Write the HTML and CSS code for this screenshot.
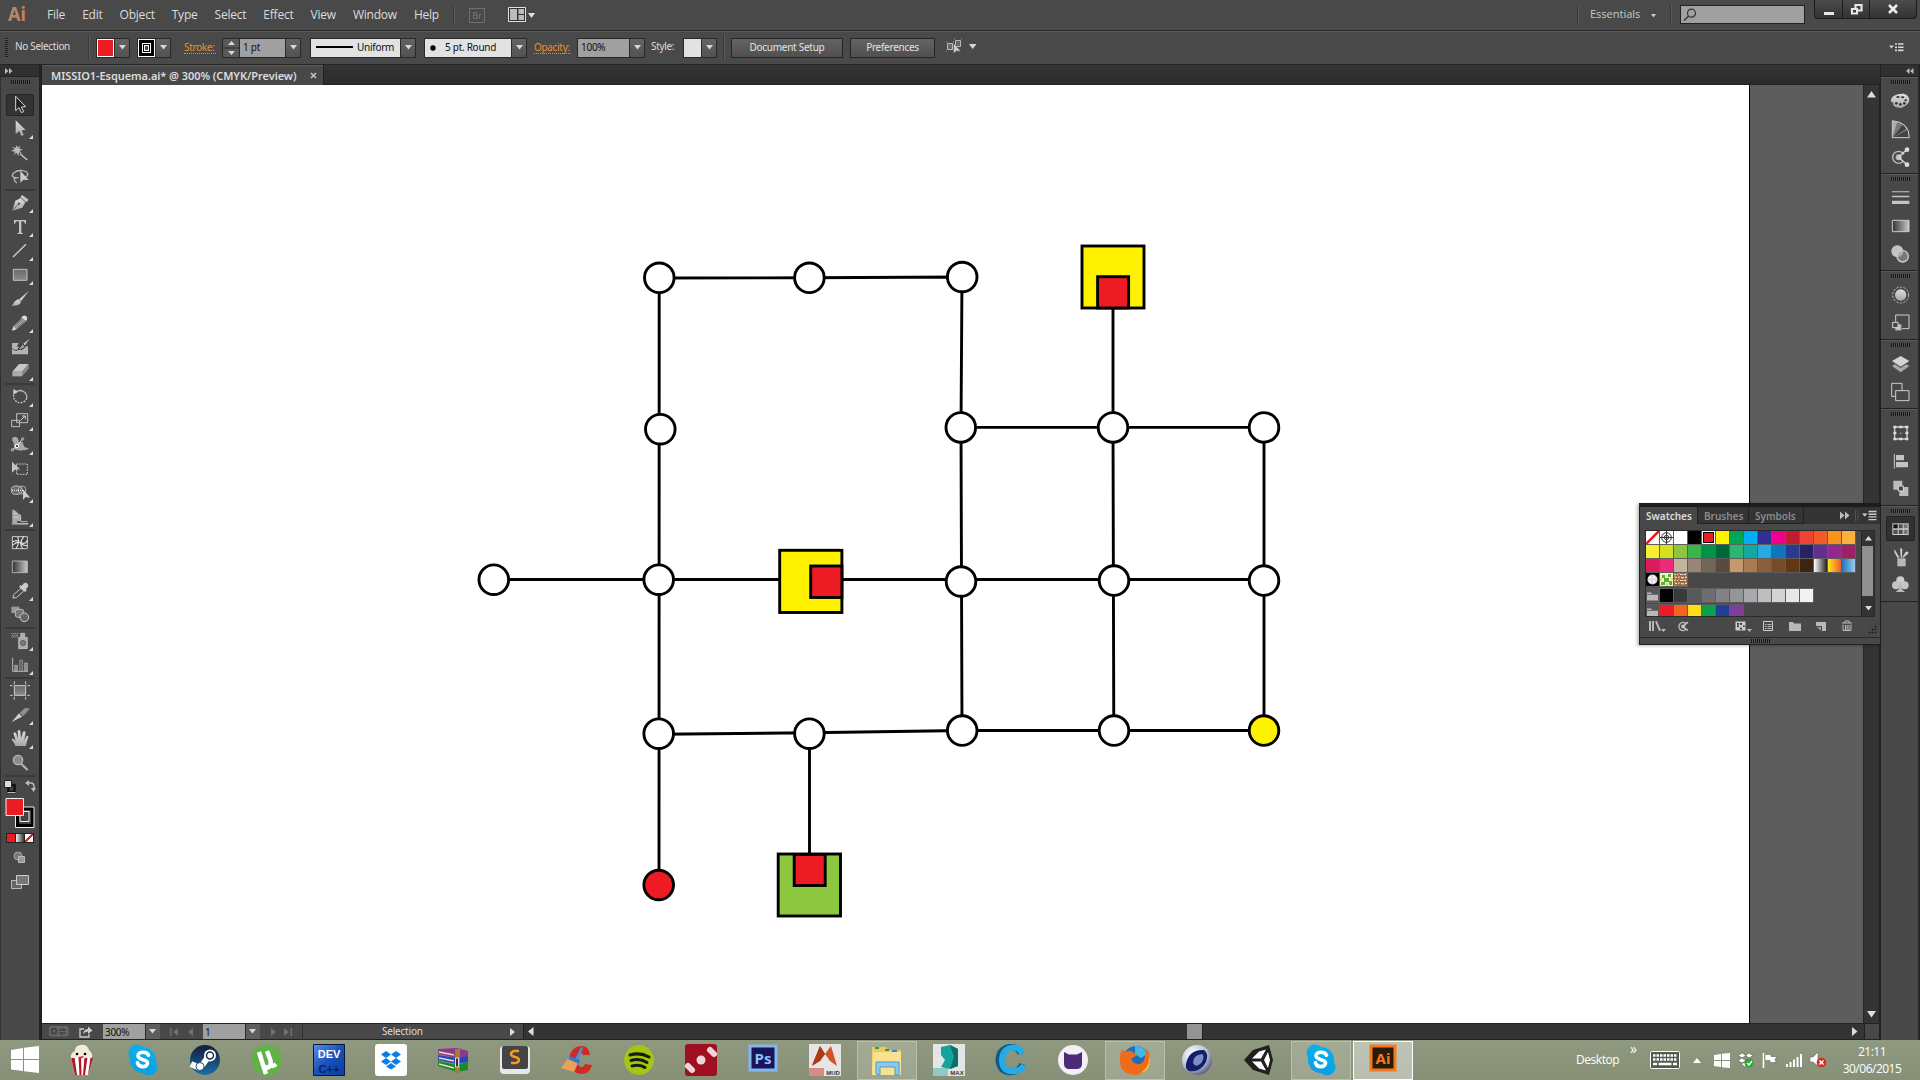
FILE: index.html
```html
<!DOCTYPE html>
<html lang="en">
<head>
<meta charset="utf-8">
<title>MISSIO1-Esquema.ai</title>
<link rel="stylesheet" href="styles.css">
</head>
<body>
<svg class="defs" width="0" height="0">
  <defs>
    <linearGradient id="gMetal" x1="0" y1="0" x2="0" y2="1"><stop offset="0" stop-color="#dedede"/><stop offset="1" stop-color="#a8a8a8"/></linearGradient>
    <linearGradient id="gDim" x1="0" y1="0" x2="0" y2="1"><stop offset="0" stop-color="#6a6a6a"/><stop offset="1" stop-color="#8a8a8a"/></linearGradient>
    <linearGradient id="gFade"><stop offset="0" stop-color="#333"/><stop offset="1" stop-color="#c8c8c8"/></linearGradient>
    <linearGradient id="gSkype" x1="0" y1="0" x2="0" y2="1"><stop offset="0" stop-color="#0ab0f0"/><stop offset="1" stop-color="#0a9fe0"/></linearGradient>
    <linearGradient id="gSteam" x1="0" y1="0" x2="0" y2="1"><stop offset="0" stop-color="#141a38"/><stop offset="1" stop-color="#1a6fa5"/></linearGradient>
    <linearGradient id="gDev" x1="0" y1="0" x2="1" y2="1"><stop offset="0" stop-color="#5c8fe8"/><stop offset=".5" stop-color="#1a50b8"/><stop offset="1" stop-color="#0a3fa0"/></linearGradient>
    <radialGradient id="gC4d" cx=".35" cy=".3" r=".8"><stop offset="0" stop-color="#fff"/><stop offset=".6" stop-color="#b8c0d8"/><stop offset="1" stop-color="#404868"/></radialGradient>
    <symbol id="skype" viewBox="0 0 32 32"><circle cx="10" cy="9" r="8.500" fill="url(#gSkype)"/><circle cx="22" cy="23" r="8.500" fill="url(#gSkype)"/><circle cx="16" cy="16" r="13" fill="url(#gSkype)"/><path d="M21.500 11.200C20.500 8.800 18.500 8.200 16 8.200c-3 0-5 1.500-5 3.600 0 5 9.600 2.700 9.600 7.300 0 2.300-2.300 3.500-4.700 3.500-2.800 0-4.600-1.200-5.500-4" fill="none" stroke="#fff" stroke-width="3.600" stroke-linecap="round"/></symbol>
    <symbol id="folder" viewBox="0 0 13 13"><path d="M1 3.500h4l1 1.500h6v6.500H1z" fill="#b8b8b8"/><path d="M1 5.500h11" stroke="#555" stroke-width=".8"/></symbol>
    <symbol id="down" viewBox="0 0 7 5"><path d="M0 0h7L3.500 4.600z" fill="#d8d8d8"/></symbol>
  </defs>
</svg>

<header class="menubar">
  <span class="brand">Ai</span>
  <nav class="menu"><span>File</span><span>Edit</span><span>Object</span><span>Type</span><span>Select</span><span>Effect</span><span>View</span><span>Window</span><span>Help</span></nav>
  <i class="vsep"></i>
  <span class="bridge">Br</span>
  <svg class="arrange" width="28" height="16" viewBox="0 0 28 16"><path d="M.5.500h17v14H.5z" fill="#333" stroke="#e2e2e2"/><path d="M2 2h7v11H2zM10.500 2H16v5h-5.500zM10.500 8H16v5h-5.500z" fill="#bbb"/><path d="M20 6h7l-3.500 5z" fill="#e2e2e2"/></svg>
  <div class="menubar-right">
    <i class="vsep"></i>
    <span class="workspace-name">Essentials</span>
    <svg class="ws-arrow" width="5" height="4"><path d="M0 0h5L2.500 3.500z" fill="#ccc"/></svg>
    <i class="vsep"></i>
    <div class="search"><svg width="14" height="14"><circle cx="8.500" cy="5.200" r="4" fill="none" stroke="#333" stroke-width="1.200"/><path d="M5.500 8.300L1 12.500" stroke="#333" stroke-width="1.500"/></svg></div>
    <div class="winbtns">
      <span class="wb wb-min"><svg width="12" height="14"><path d="M1 10h10v3H1z" fill="#e8e8e8"/></svg></span>
      <span class="wb wb-max"><svg width="13" height="13"><path d="M5.500 2h6v5.500h-6z" fill="none" stroke="#e8e8e8" stroke-width="2.200"/><path d="M2 6h5v4.500H2z" fill="#333" stroke="#e8e8e8" stroke-width="2.200"/></svg></span>
      <span class="wb wb-close"><svg width="12" height="10"><path d="M2 1l8 8M10 1L2 9" stroke="#eee" stroke-width="2.500"/></svg></span>
    </div>
  </div>
</header>

<section class="control">
  <i class="vgrip"></i>
  <span class="lbl nosel">No Selection</span>
  <i class="vsep tall"></i>
  <div class="field fill"><b class="chip red"></b><u><svg width="7" height="5"><use href="#down"/></svg></u></div>
  <div class="field strk"><b class="chip ring"></b><u><svg width="7" height="5"><use href="#down"/></svg></u></div>
  <span class="lbl link l-stroke">Stroke:</span>
  <div class="field weight"><s><svg width="7" height="16"><path d="M0 5h7L3.500 1zM0 11h7l-3.500 4z" fill="#d8d8d8"/><path d="M-5 8h18" stroke="#2b2b2b"/></svg></s><em>1 pt</em><u><svg width="7" height="5"><use href="#down"/></svg></u></div>
  <div class="field profile"><em class="light"><svg width="37" height="3"><path d="M0 0h37v2H0z"/></svg>Uniform</em><u><svg width="7" height="5"><use href="#down"/></svg></u></div>
  <div class="field brush"><em class="light"><svg width="6" height="6"><circle cx="3" cy="3" r="2.700"/></svg>5 pt. Round</em><u><svg width="7" height="5"><use href="#down"/></svg></u></div>
  <span class="lbl link l-opacity">Opacity:</span>
  <div class="field opac"><em>100%</em><u><svg width="7" height="5"><use href="#down"/></svg></u></div>
  <span class="lbl l-style">Style:</span>
  <div class="field sty"><b class="chip pale"></b><u><svg width="7" height="5"><use href="#down"/></svg></u></div>
  <i class="vsep tall"></i>
  <span class="btn b-doc">Document Setup</span>
  <span class="btn b-pref">Preferences</span>
  <svg class="isolate" width="32" height="16" viewBox="0 0 32 16"><path d="M1.500 4.500h5v6h-5zM9.500 1.500h5v6h-5z" fill="#666" stroke="#bbb"/><path d="M0 3h8M0 12h8M8 0h8" stroke="#999" stroke-dasharray="1 6"/><path d="M7.500 4v10.500l2.800-2.500 4.700.5z" fill="#ccc" stroke="#444" stroke-width=".5"/><path d="M23 5h7.500L26.700 10z" fill="#d8d8d8"/></svg>
  <svg class="flyout" width="15" height="9"><path d="M0 2.500h5L2.500 5.500z" fill="#ccc"/><path d="M6 1h2M9 1h5.500M6 4.200h2M9 4.200h5.500M6 7.400h2M9 7.400h5.500" stroke="#d8d8d8" stroke-width="1.600"/></svg>
</section>

<main class="work">
  <aside class="tools">
    <div class="collapse left"><svg width="8" height="6"><path d="M0 0l3.500 3L0 6zM4 0l3.500 3L4 6z" fill="#bbb"/></svg></div>
    <i class="grip"></i>
    <div class="tgroup first">
      <div class="tool active"><svg viewBox="0 0 60 60"><path d="M17 4v43l10-9 7 15 7-3-7-14 13-1z" fill="#222" stroke="#d8d8d8" stroke-width="3"/></svg></div>
      <div class="tool more"><svg viewBox="0 0 60 60"><path d="M17 4v41l11-9 6 15 7-3-6-14 12-1z" fill="url(#gMetal)"/></svg></div>
      <div class="tool"><svg viewBox="0 0 60 60"><path d="M20 5l3 9 8-6-3 10 11 1-10 5 8 8-10-4-2 12-5-11-10 7 6-10-13-2 11-5-8-8 11 4z" fill="#bcbcbc"/><path d="M30 32l22 19" stroke="#ccc" stroke-width="4"/></svg></div>
      <div class="tool"><svg viewBox="0 0 60 60"><path d="M26 32C8 36 2 25 12 17 24 7 50 9 53 20c1 6-4 10-8 11M17 30c-9 6-2 14 4 18" fill="none" stroke="#b8b8b8" stroke-width="4"/><path d="M31 11v36l9-9 16 1z" fill="#ccc"/></svg></div>
    </div>
    <div class="tgroup">
      <div class="tool more"><svg viewBox="0 0 60 60"><path d="M36 6L56 20l-7 8L31 12z" fill="#c8c8c8"/><path d="M32 15l14 13-9 16L7 53l9-30z" fill="url(#gMetal)"/><path d="M8 52l17-19" stroke="#444" stroke-width="2"/><circle cx="27" cy="32" r="3" fill="#333"/></svg></div>
      <div class="tool more"><svg viewBox="0 0 60 60"><path d="M12 9h36v11h-3q-1-7-7-7h-4v33q0 3 5 3v2H22v-2q5 0 5-3V13h-5q-6 0-7 7h-3z" fill="#c4c4c4"/></svg></div>
      <div class="tool more"><svg viewBox="0 0 60 60"><path d="M9 48L48 10" stroke="#d0d0d0" stroke-width="4"/></svg></div>
      <div class="tool more"><svg viewBox="0 0 60 60"><path d="M10 13h41v33H10z" fill="url(#gDim)" stroke="#c0c0c0" stroke-width="3"/></svg></div>
      <div class="tool"><svg viewBox="0 0 60 60"><path d="M57 5L27 31l6 6z" fill="#ccc"/><path d="M26 31l7 8c-3 10-14 12-29 11 8-4 8-16 22-19z" fill="url(#gMetal)"/></svg></div>
      <div class="tool more"><svg viewBox="0 0 60 60"><path d="M36 14l11 12-29 24-11 3 3-13z" fill="#9a9a9a"/><path d="M34 13q7-9 14-4 7 6 0 16z" fill="#ddd"/><path d="M10 40l8 9-12 4z" fill="#ddd"/><path d="M16 36l20-17M22 43l20-17" stroke="#444" stroke-width="1.500"/></svg></div>
      <div class="tool"><svg viewBox="0 0 60 60"><path d="M6 18h20l-6 12 34-2v24H6z" fill="#b4b4b4"/><path d="M8 35q9 10 20 0" fill="none" stroke="#444" stroke-width="3"/><path d="M59 5L39 21l5 5z" fill="#ccc"/><path d="M37 20l9 8q-7 13-22 8 6-4 13-16z" fill="#999" stroke="#2c2c2c" stroke-width="3"/></svg></div>
      <div class="tool more"><svg viewBox="0 0 60 60"><path d="M27 9h29L36 32H7z" fill="#c8c8c8"/><path d="M36 32L56 9v14L36 46z" fill="#8a8a8a"/><path d="M7 32h29v14H7z" fill="#aaa"/></svg></div>
    </div>
    <div class="tgroup">
      <div class="tool more"><svg viewBox="0 0 60 60"><path d="M18 15A20 20 0 0 1 50 34" fill="none" stroke="#bbb" stroke-width="4"/><path d="M50 34A20 20 0 1 1 12 20" fill="none" stroke="#ccc" stroke-width="4" stroke-dasharray="5 4"/><path d="M10 6v17l15-9z" fill="#ccc"/></svg></div>
      <div class="tool more"><svg viewBox="0 0 60 60"><path d="M20 8h33v27H20zM5 28h24v19H5z" fill="none" stroke="#c0c0c0" stroke-width="3"/><path d="M32 28l12-12M36 15h10v10" fill="none" stroke="#ddd" stroke-width="3"/></svg></div>
      <div class="tool more"><svg viewBox="0 0 60 60"><path d="M6 10q8-8 16-2 5 5 4 14l12-2q2 12 6 16 6 4 14 3-8 8-18 6-8 4-16 0-12 2-12-10 0-14-6-19 2-6-0-6z" fill="#a8a8a8"/><path d="M6 44L21 33 37 12" fill="none" stroke="#ddd" stroke-width="3"/><circle cx="21" cy="33" r="5" fill="#444" stroke="#fff" stroke-width="3"/><path d="M4 42h6v6H4zM35 9h6v6h-6z" fill="#444" stroke="#ddd" stroke-width="2"/></svg></div>
      <div class="tool"><svg viewBox="0 0 60 60"><path d="M20 15h32v31H20z" fill="none" stroke="#ccc" stroke-width="3" stroke-dasharray="5 3"/><path d="M6 8v33l9-9 15-1z" fill="#c4c4c4"/></svg></div>
      <div class="tool more"><svg viewBox="0 0 60 60"><rect x="4" y="9" width="33" height="25" rx="12" fill="#6c6c6c" stroke="#bbb" stroke-width="3"/><circle cx="36" cy="21" r="12" fill="none" stroke="#aaa" stroke-width="3"/><path d="M6 22h34" stroke="#fff" stroke-width="3" stroke-dasharray="3 3"/><path d="M39 19v32l8-9 14 2z" fill="#ccc"/></svg></div>
      <div class="tool more"><svg viewBox="0 0 60 60"><path d="M7 7l11 5v38H7zM21 17l11 6v19H21z" fill="#aaa"/><path d="M7 19h14M7 31h20M20 14v36h34M32 24v20h21M5 51h50" stroke="#ccc" stroke-width="2.500" fill="none"/></svg></div>
    </div>
    <div class="tgroup">
      <div class="tool"><svg viewBox="0 0 60 60"><path d="M7 11h45v36H7z" fill="#404040" stroke="#ccc" stroke-width="3"/><path d="M7 27q14-9 22 1t23 10M7 37q16-14 28-8t17-7M18 47q12-18 5-36M38 47q-13-14 3-36" fill="none" stroke="#ddd" stroke-width="3.500"/></svg></div>
      <div class="tool"><svg viewBox="0 0 60 60"><path d="M7 12h45v35H7z" fill="url(#gFade)" stroke="#c0c0c0" stroke-width="2.500"/></svg></div>
      <div class="tool more"><svg viewBox="0 0 60 60"><path d="M36 14q4-10 12-9 9 4 6 12l-6 8 2 4-5 4-18-16 4-4z" fill="#ccc"/><path d="M33 22l8 8-22 20-10 1 1-9z" fill="none" stroke="#ccc" stroke-width="3"/></svg></div>
      <div class="tool"><svg viewBox="0 0 60 60"><path d="M4 5h24v19H4z" fill="#999"/><rect x="16" y="13" width="25" height="24" rx="7" fill="#777" stroke="#bbb" stroke-width="3"/><circle cx="43" cy="37" r="13" fill="#666" stroke="#c8c8c8" stroke-width="3"/></svg></div>
    </div>
    <div class="tgroup">
      <div class="tool more"><svg viewBox="0 0 60 60"><path d="M4 8h22M7 13h18M4 18h20" stroke="#bbb" stroke-width="3" stroke-dasharray="3 3"/><path d="M32 7h12v10H32zM26 19h26v34H26z" fill="#aaa" stroke="#ccc" stroke-width="2"/><circle cx="39" cy="36" r="7" fill="#aaa" stroke="#333" stroke-width="3"/><circle cx="39" cy="36" r="2" fill="#222"/></svg></div>
      <div class="tool more"><svg viewBox="0 0 60 60"><path d="M8 8v41h46" fill="none" stroke="#bbb" stroke-width="3"/><path d="M14 31h8v16h-8zM44 24h8v23h-8z" fill="#888" stroke="#bbb" stroke-width="2"/><path d="M29 15h9v32h-9z" fill="#666" stroke="#999" stroke-width="2"/></svg></div>
    </div>
    <div class="tgroup">
      <div class="tool"><svg viewBox="0 0 60 60"><path d="M13 14h34v29H13z" fill="url(#gDim)"/><path d="M0 14h8m5 0h34m5 0h8M0 43h8m5 0h34m5 0h8M13 1v9m0 4v29m0 4v9M47 1v9m0 4v29m0 4v9" stroke="#ccc" stroke-width="3" fill="none"/></svg></div>
      <div class="tool more"><svg viewBox="0 0 60 60"><path d="M29 23L45 9l15 2-21 23z" fill="#8e8e8e"/><path d="M27 25l9 10L5 51z" fill="#d0d0d0"/></svg></div>
      <div class="tool more"><svg viewBox="0 0 60 60"><path d="M16 51c-2-10-8-15-12-20q5-5 13 5L10 12q5-6 9 2l5 15-1-24q5-5 8 1l2 22 6-20q5-4 8 2l-4 23 7-12q6-2 5 4L47 51z" fill="url(#gMetal)"/></svg></div>
      <div class="tool"><svg viewBox="0 0 60 60"><circle cx="24" cy="21" r="14" fill="#8a8a8a" stroke="#b8b8b8" stroke-width="4"/><path d="M34 33l19 18" stroke="#b0b0b0" stroke-width="7"/></svg></div>
    </div>
    <div class="tgroup colors">
      <div class="mini"><svg width="12" height="13"><path d="M4.500 5h6v7h-6z" fill="none" stroke="#111" stroke-width="2.500"/><path d="M11.500 12.500h-8" stroke="#bbb"/><path d="M.5.500h7v7h-7z" fill="#ddd" stroke="#222"/></svg><svg width="11" height="12"><path d="M2 3h4q3 0 3 4v3" fill="none" stroke="#bbb" stroke-width="1.500"/><path d="M0 3l4-3v6zM6 8h5l-2.500 4z" fill="#bbb"/></svg></div>
      <div class="fillstroke"><svg width="30" height="32"><path d="M12.500 11.500h15v17h-15z" fill="#444" stroke="#000" stroke-width="3"/><path d="M10.500 10h18.500v20.500H10.500zM15 14.500h9v10h-9z" fill="none" stroke="#eee"/><path d="M1 1.500h17.500v17H1z" fill="#ed1c24" stroke="#eee"/></svg></div>
      <div class="modes"><b class="red"></b><b class="grad"></b><b class="none"></b></div>
      <div class="drawmode"><svg width="14" height="14"><circle cx="5" cy="5" r="4" fill="#777" stroke="#aaa"/><path d="M5.500 5.500h6v6h-6z" fill="#999" stroke="#bbb"/></svg></div>
      <div class="screenmode"><svg width="18" height="14"><path d="M.5 5.500h10v8H.5z" fill="#666" stroke="#bbb"/><path d="M5.500.500h12v9h-12z" fill="#777" stroke="#ccc"/></svg></div>
    </div>
  </aside>

  <section class="doc">
    <div class="tabs"><div class="tab"><span class="tabname">MISSIO1-Esquema.ai* @ 300% (CMYK/Preview)</span><svg width="7" height="7"><path d="M1 1l5 5M6 1L1 6" stroke="#c8c8c8" stroke-width="1.500"/></svg></div></div>
    <div class="view">
      <div class="artboard">
        <svg width="1707" height="938" viewBox="42 85 1707 938">
          <g class="edges">
            <path d="M659.500 278L809 277.800 962 277 961 427.400 961.500 581 962 730.500 810 732.800 659 734.200M659.200 278L659 885M493.500 579.500H1264M961 427.400H1264V730.500H962M1113 308V427.400L1113.800 730.500M809.500 733V853"/>
          </g>
          <g class="nodes">
            <circle cx="659.300" cy="277.800" r="14.800"/><circle cx="809.400" cy="277.800" r="14.800"/><circle cx="962.200" cy="277" r="14.800"/>
            <circle cx="660.300" cy="429.200" r="14.800"/><circle cx="960.800" cy="427.400" r="14.800"/><circle cx="1113" cy="427.400" r="14.800"/><circle cx="1264" cy="427.400" r="14.800"/>
            <circle cx="493.800" cy="579.700" r="14.800"/><circle cx="658.700" cy="579.700" r="14.800"/><circle cx="961" cy="581.500" r="14.800"/><circle cx="1114" cy="580.600" r="14.800"/><circle cx="1264" cy="580.600" r="14.800"/>
            <circle cx="658.700" cy="733.700" r="14.800"/><circle cx="809.400" cy="733.700" r="14.800"/><circle cx="962.200" cy="730.600" r="14.800"/><circle cx="1114" cy="730.600" r="14.800"/>
            <circle class="n-yellow" cx="1264" cy="730.600" r="14.800"/><circle class="n-red" cx="658.700" cy="885" r="14.800"/>
            <rect class="n-yellow" x="1082" y="246" width="62" height="62"/><rect class="n-red" x="1097.600" y="276.700" width="31" height="31.300"/>
            <rect class="n-yellow" x="779.700" y="550.300" width="62.200" height="62.200"/><rect class="n-red" x="810.700" y="566" width="31.200" height="31.500"/>
            <rect class="n-green" x="778.200" y="854" width="62.300" height="62"/><rect class="n-red" x="794.200" y="854.500" width="31" height="31"/>
          </g>
        </svg>
      </div>
      <div class="paste"></div>
      <div class="vscroll"><svg width="9" height="7"><path d="M0 6.500h9L4.500 0z" fill="#ddd"/></svg><svg width="9" height="7"><path d="M0 0h9L4.500 6.500z" fill="#ddd"/></svg></div>
    </div>
    <div class="status">
      <svg class="gpu" width="20" height="11"><rect width="19.500" height="10.500" rx="2" fill="#666"/><circle cx="5" cy="5" r="2.500" fill="none" stroke="#444" stroke-width="2"/><path d="M10 4h6l-2-2M17 7h-6l2 2" stroke="#444" fill="none" stroke-width="1.300"/></svg>
      <svg class="share" width="14" height="12"><path d="M5 3H1v8h9V8" fill="none" stroke="#ccc" stroke-width="1.300"/><path d="M4 8q1-5 5-5V.500l4.500 4L9 8V5.500Q6 5.500 4 8z" fill="#ccc"/></svg>
      <div class="sfield s-zoom"><em>300%</em><u><svg width="7" height="5"><use href="#down"/></svg></u></div>
      <svg class="nav-prev" width="24" height="8"><path d="M0 0h1.500v8H0zM8 0v8L3 4zM23 0v8l-5-4z" fill="#707070"/></svg>
      <div class="sfield s-page"><em>1</em><u><svg width="7" height="5"><use href="#down"/></svg></u></div>
      <svg class="nav-next" width="24" height="8"><path d="M1 0v8l5-4zM14 0v8l5-4zM20.500 0H22v8h-1.500z" fill="#707070"/></svg>
      <span class="mode">Selection</span>
      <svg class="mode-arrow" width="6" height="8"><path d="M0 0v8l5-4z" fill="#ddd"/></svg>
      <div class="hscroll"><svg width="6" height="9"><path d="M5.500 0v9L0 4.500z" fill="#ddd"/></svg><i class="thumb"></i><svg width="6" height="9"><path d="M0 0v9l5.500-4.500z" fill="#ddd"/></svg></div>
      <i class="corner"></i>
    </div>
  </section>

  <aside class="dock">
    <div class="collapse"><svg width="8" height="6"><path d="M3.500 0L0 3l3.500 3zM7.500 0L4 3l3.500 3z" fill="#bbb"/></svg></div>
    <div class="dgroup">
      <i class="grip"></i>
      <div class="dicon"><svg viewBox="0 0 60 60"><path d="M3 29C3 16 18 9 33 9q4-3 8-1 15 4 17 17 1 16-24 26-28 0-24-17Q3 36 3 29z" fill="url(#gMetal)"/><g fill="#333"><ellipse cx="24" cy="18" rx="5" ry="3"/><ellipse cx="38" cy="19" rx="5" ry="3"/><ellipse cx="47" cy="28" rx="4" ry="3"/><circle cx="19" cy="37" r="4"/><circle cx="31" cy="40" r="4"/><circle cx="43" cy="37" r="4"/></g></svg></div>
      <div class="dicon"><svg viewBox="0 0 60 60"><path d="M7 5v51h51Q58 10 7 5z" fill="#aaa"/><path d="M7 56L54 31l4 25zM7 56L38 16l12 14z" fill="#444"/><path d="M7 56L22 8l16 8z" fill="#777"/><path d="M7 5v51h51Q58 10 7 5z" fill="none" stroke="#ccc" stroke-width="3"/></svg></div>
      <div class="dicon"><svg viewBox="0 0 60 60"><circle cx="26" cy="31" r="18" fill="none" stroke="#bbb" stroke-width="4" stroke-dasharray="88 26" transform="rotate(45 26 31)"/><circle cx="26" cy="31" r="9" fill="#bbb"/><path d="M26 31L51 7M26 31l25 22" stroke="#ddd" stroke-width="4"/><circle cx="51" cy="8" r="7" fill="#ddd"/><circle cx="51" cy="53" r="7" fill="#ddd"/></svg></div>
    </div>
    <div class="dgroup">
      <i class="grip"></i>
      <div class="dicon"><svg viewBox="0 0 60 60"><path d="M6 10h52v3H6zM6 23h52v5H6zM6 38h52v10H6z" fill="#c4c4c4"/></svg></div>
      <div class="dicon"><svg viewBox="0 0 60 60"><path d="M7 13h50v34H7z" fill="url(#gFade)" stroke="#ccc" stroke-width="3"/></svg></div>
      <div class="dicon"><svg viewBox="0 0 60 60"><circle cx="22" cy="22" r="18" fill="#c4c4c4"/><circle cx="38" cy="37" r="17" fill="#999" fill-opacity=".6" stroke="#ccc" stroke-width="4"/></svg></div>
    </div>
    <div class="dgroup">
      <i class="grip"></i>
      <div class="dicon"><svg viewBox="0 0 60 60"><circle cx="32" cy="30" r="17" fill="url(#gMetal)"/><circle cx="32" cy="30" r="24" fill="none" stroke="#bbb" stroke-width="3" stroke-dasharray="7 4"/></svg></div>
      <div class="dicon"><svg viewBox="0 0 60 60"><path d="M17 26V6h40v41H36" fill="none" stroke="#ccc" stroke-width="3"/><path d="M16 34h18v18H16z" fill="#c0c0c0"/><path d="M8 28h16v16H8z" fill="#444" stroke="#ddd" stroke-width="3"/></svg></div>
    </div>
    <div class="dgroup">
      <i class="grip"></i>
      <div class="dicon"><svg viewBox="0 0 60 60"><path d="M6 36l26 19 26-19-9-5-17 11-17-11z" fill="#aaa"/><path d="M32 6l26 15-26 17L6 21z" fill="#d4d4d4"/></svg></div>
      <div class="dicon"><svg viewBox="0 0 60 60"><path d="M5 4h31v39H5z" fill="none" stroke="#ccc" stroke-width="3"/><path d="M17 26h40v30H17z" fill="#484848" stroke="#ccc" stroke-width="3"/></svg></div>
    </div>
    <div class="dgroup">
      <i class="grip"></i>
      <div class="dicon"><svg viewBox="0 0 60 60"><path d="M14 12h37v36H14z" fill="none" stroke="#ccc" stroke-width="4"/><path d="M10 8h9v8h-9zM28 8h9v8h-9zM46 8h9v8h-9zM10 26h9v8h-9zM46 26h9v8h-9zM10 44h9v8h-9zM28 44h9v8h-9zM46 44h9v8h-9z" fill="#ddd"/><path d="M31 29h3v3h-3z" fill="#fff"/></svg></div>
      <div class="dicon"><svg viewBox="0 0 60 60"><path d="M13 9v44" stroke="#ccc" stroke-width="3"/><path d="M18 12h24v16H18zM18 33h36v16H18z" fill="#c4c4c4"/></svg></div>
      <div class="dicon"><svg viewBox="0 0 60 60"><path d="M10 5h27v27H10zM28 24h27v27H28z" fill="#bbb"/><path d="M25 21h15v15H25z" fill="#444" stroke="#ddd" stroke-width="3"/></svg></div>
    </div>
    <div class="dgroup">
      <i class="grip"></i>
      <div class="dicon on"><svg viewBox="0 0 60 60"><path d="M7 13h49v35H7z" fill="#ccc"/><path d="M10 16h13v12H10z" fill="#111"/><path d="M26 16h12v12H26zM10 32h13v13H10zM26 32h12v13H26z" fill="#505050"/><path d="M41 16h12v12H41zM41 32h12v13H41z" fill="#777"/></svg></div>
      <div class="dicon"><svg viewBox="0 0 60 60"><path d="M22 34h25v24H22z" fill="#b8b8b8"/><path d="M29 32L17 12l-4-5 0 9 9 16zM32 31L30 3l7 3-1 27zM37 31l9-15q8-6 10 3l-17 14z" fill="#ccc"/></svg></div>
      <div class="dicon"><svg viewBox="0 0 60 60"><circle cx="31" cy="16" r="12" fill="#ccc"/><circle cx="18" cy="31" r="12" fill="#c4c4c4"/><circle cx="44" cy="31" r="12" fill="#c4c4c4"/><path d="M28 22h6l1 20 10 9H17l10-9z" fill="#bbb"/></svg></div>
    </div>
  </aside>
</main>

<div class="panel">
  <div class="ptabs"><span class="ptab on">Swatches</span><span class="ptab p2">Brushes</span><span class="ptab p3">Symbols</span>
    <svg class="pctl" width="37" height="11"><path d="M0 1.500l4.500 4L0 9.500zM5 1.500l4.500 4-4.500 4z" fill="#bbb"/><path d="M15.500 0v11M18 0v11" stroke="#555"/><path d="M22 3.500h5.500L24.700 6.500z" fill="#ccc"/><path d="M28.500 1.500h8M28.500 4.200h8M28.500 6.900h8M28.500 9.600h8" stroke="#ccc" stroke-width="1.400"/></svg>
  </div>
  <div class="plist">
    <div class="swatches">
      <div class="srow"><b class="none"></b><b class="w"><svg width="13" height="13"><circle cx="6.500" cy="6.500" r="4.800" fill="none" stroke="#333"/><circle cx="6.500" cy="6.500" r="2.200" fill="none" stroke="#333"/><path d="M6.500 0v13M0 6.500h13" stroke="#333"/></svg></b><b class="w"></b><b class="c000"></b><b class="sel"></b><b class="r1f"></b><b class="r1g"></b><b class="r1h"></b><b class="r1i"></b><b class="r1j"></b><b class="r1k"></b><b class="r1l"></b><b class="r1m"></b><b class="r1n"></b><b class="r1o"></b></div>
      <div class="srow"><b class="r2a"></b><b class="r2b"></b><b class="r2c"></b><b class="r2d"></b><b class="r2e"></b><b class="r2f"></b><b class="r2g"></b><b class="r2h"></b><b class="r2i"></b><b class="r2j"></b><b class="r2k"></b><b class="r2l"></b><b class="r2m"></b><b class="r2n"></b><b class="r2o"></b></div>
      <div class="srow"><b class="r3a"></b><b class="r3b"></b><b class="r3c"></b><b class="r3d"></b><b class="r3e"></b><b class="r3f"></b><b class="r3g"></b><b class="r3h"></b><b class="r3i"></b><b class="r3j"></b><b class="r3k"></b><b class="r3l"></b><b class="r3m"></b><b class="r3n"></b><b class="r3o"></b></div>
      <div class="srow"><b class="c000"><svg width="13" height="13"><circle cx="6.500" cy="6.500" r="5" fill="#ddd"/><path d="M3 4.500h7M3 8.500h7" stroke="#fff" stroke-width="2" stroke-dasharray="2 2"/></svg></b><b class="leafy"><svg width="13" height="13"><path d="M2 2h3v3H2zM8 1h3v3H8zM4 5h5v4H4zM1 9h4v3H1zM9 8h3v4H9z" fill="#5ab02e"/><path d="M0 5h2v3H0zM11 5h2v2h-2zM6 10h2v3H6z" fill="#e8d35c"/></svg></b><b class="r4c"><svg width="13" height="13"><path d="M0 1.500h13M1 4.500h12M0 7.500h13M1 10.500h12" stroke="#f1dcc8" stroke-dasharray="2 1 1 2 3 1"/><path d="M1 3v10M5 0v12M9 1v12M12 0v10" stroke="#dcb99a" stroke-dasharray="1 2 2 1"/></svg></b></div>
      <div class="srow gap"><b class="fold"><svg width="13" height="13"><use href="#folder"/></svg></b><b class="c000"></b><b class="k1"></b><b class="k2"></b><b class="k3"></b><b class="k4"></b><b class="k5"></b><b class="k6"></b><b class="k7"></b><b class="k8"></b><b class="k9"></b><b class="k10"></b></div>
      <div class="srow gap2"><b class="fold"><svg width="13" height="13"><use href="#folder"/></svg></b><b class="red"></b><b class="q1"></b><b class="q2"></b><b class="q3"></b><b class="q4"></b><b class="q5"></b></div>
    </div>
    <div class="pscroll"><i><svg width="7" height="5"><path d="M0 4.500h7L3.500 0z" fill="#ddd"/></svg></i><i class="pthumb"></i><i><svg width="7" height="5"><use href="#down"/></svg></i></div>
  </div>
  <div class="pfoot">
    <svg width="230" height="16" viewBox="0 0 230 16" fill="#b8b8b8"><path d="M2 3h2v10H2zM5 3h2v10H5zM8 3.500l2-.5 4 9.500-2 .5zM14 11h5l-2.500 3z"/><circle cx="36" cy="8.500" r="4" fill="none" stroke="#b8b8b8" stroke-width="1.500" stroke-dasharray="19 7" transform="rotate(40 36 8.500)"/><circle cx="36" cy="8.500" r="2"/><path d="M36 8.500L41 4M36 8.500l5 4" stroke="#ccc" stroke-width="1.500"/><path d="M88.500 3.500h10v9h-10z" fill="#ccc"/><path d="M90 5h2v1.700h-2zM93 5h2v1.700h-2zM90 7.400h2v1.600h-2zM96 7.400h1.700V9H96zM93 9.800h2v1.600h-2z" fill="#333"/><path d="M100 11h5l-2.500 3z"/><path d="M116.500 3.500h9v9h-9z" fill="none" stroke="#ccc"/><path d="M118 6h1.500v1H118zM120.500 6h4v1h-4zM118 8h1.500v1H118zM120.500 8h4v1h-4zM118 10h1.500v1H118zM120.500 10h4v1h-4z"/><path d="M142 4h4l1 1.500h7V13h-12zM169 4h10v9h-4V8h-6z"/><path d="M170 9h4v4z" fill="#999"/><path d="M195 5h10M198 5V3h4v2M196 6.500v6h8v-6M198.500 7v5M200.200 7v5M202 7v5" fill="none" stroke="#bbb"/><path d="M229 8v1h-1V8zM229 11v1h-1v-1zM226 11v1h-1v-1zM229 14v1h-1v-1zM226 14v1h-1v-1zM223 14v1h-1v-1z" fill="#222" stroke="#222"/></svg>
  </div>
  <div class="pbottom"><i class="grip"></i></div>
</div>

<footer class="taskbar">
  <div class="start"><svg width="28" height="27" viewBox="0 0 28 27" fill="#fff"><path d="M0 4l12-2v11H0zM13 1.800L28 0v13H13zM0 14h12v11L0 23.500zM13 14h15v13l-15-1.800z"/></svg></div>
  <div class="app"><svg viewBox="0 0 32 32"><path d="M6 13h21l-4 18H10z" fill="#fff"/><path d="M6 13h3.500l2.500 18h-2zM13.500 13h2.500l.5 18h-2zM19.500 13h3L20 31h-2zM25.500 13H28l-5 18z" fill="#b5142b"/><path d="M6 14q-1-5 4-7 0-6 6-6 6-1 8 5 4 3 3 8z" fill="#f3ecdc"/><circle cx="12" cy="10" r="1.300"/><circle cx="20" cy="10" r="1.300"/><path d="M13 13q3 4 6-1z" fill="#c33"/></svg></div>
  <div class="app"><svg viewBox="0 0 32 32"><use href="#skype"/></svg></div>
  <div class="app"><svg viewBox="0 0 32 32"><circle cx="16" cy="16" r="15" fill="url(#gSteam)"/><path d="M2 20l9 4M11 24l9-12" stroke="#fff" stroke-width="6"/><circle cx="21" cy="11.500" r="6" fill="#fff"/><circle cx="21" cy="11.500" r="3.500" fill="#fff" stroke="#1b2a50" stroke-width="1.500"/><circle cx="11" cy="22.500" r="4" fill="#fff" stroke="#1a4a7c"/></svg></div>
  <div class="app"><svg viewBox="0 0 32 32"><circle cx="16" cy="16" r="15.500" fill="#62b146"/><path d="M8 8l4 13q2 4 6 2 3-3 1-8l-3-8M19 20q2 4 6 0M12 21l3 9" stroke="#fff" stroke-width="4.500" fill="none"/></svg></div>
  <div class="app"><svg viewBox="0 0 32 32"><path d="M.5.500h31v31H.5z" fill="url(#gDev)" stroke="#0a1440"/><text x="16" y="13.500" class="t-dev">DEV</text><text x="16" y="29" class="t-cpp">C++</text></svg></div>
  <div class="app"><svg viewBox="0 0 32 32"><rect width="32" height="32" rx="3" fill="#fff"/><path d="M11 7l5 3.500-5 3.500-5-3.500zM21 7l5 3.500-5 3.500-5-3.500zM11 14l5 3.500-5 3.500-5-3.500zM21 14l5 3.500-5 3.500-5-3.500zM16 19l5 3.500-5 3-5-3z" fill="#0a7ee8"/></svg></div>
  <div class="app"><svg viewBox="0 0 32 32"><path d="M1 5l19-1 11 3v6l-11 1L1 10z" fill="#8a3a8c"/><path d="M1 11l19 3 11-2v6l-11 2L1 16z" fill="#2448c0"/><path d="M1 17l19 4 11-3v8l-11 2L1 22z" fill="#178a2a"/><path d="M2 8l15 3M2 14l15 3M2 20l15 4" stroke="#f0d8c0" stroke-width="1.300"/><path d="M18 5h5v24h-5z" fill="#a87c30"/><path d="M18.500 14h3v9h-3z" fill="#333" stroke="#ddd"/></svg></div>
  <div class="app"><svg viewBox="0 0 32 32"><rect x="1" y="2" width="30" height="28" rx="4" fill="#e8e8e8"/><rect x="3" y="2" width="26" height="23" rx="2" fill="#444"/><path d="M20 7h-5q-3 1-3 3t4 3q4 1 4 3t-3 3h-5" fill="none" stroke="#f89820" stroke-width="2.500"/></svg></div>
  <div class="app"><svg viewBox="0 0 32 32"><path d="M29 11q-1-10-10-9-10 2-11 13 1 14 12 15 9 0 11-9l-7-1q-2 5-6 2-4-5-1-12 3-4 5 1z" fill="#d02a25"/><path d="M20 3l2 1-5 13-3-2z" fill="#4a90d8"/><path d="M8 13l10 4-5 11L0 24z" fill="#e9a25c"/><path d="M9 12l10 4-1 4-11-5z" fill="#3a7bc0"/></svg></div>
  <div class="app"><svg viewBox="0 0 32 32"><circle cx="16" cy="16" r="15" fill="#a3c614"/><path d="M7 11q10-3 19 2M8 16.500q9-2.500 16 2M9 22q8-2 13 1.500" fill="none" stroke="#171c08" stroke-width="3" stroke-linecap="round"/></svg></div>
  <div class="app"><svg viewBox="0 0 32 32"><rect width="32" height="32" rx="3" fill="#9e0f20"/><g stroke="#f0d4d8" stroke-width="6" stroke-linecap="round"><path d="M25 6l4 4M3 22l4 4"/></g><circle cx="16" cy="16" r="4.500" fill="#f0d4d8"/></svg></div>
  <div class="app"><svg viewBox="0 0 32 32"><path d="M3 2h26v24H3z" fill="#1a1358" stroke="#82b8f2" stroke-width="3"/><text x="16" y="19.500" class="t-ps">Ps</text></svg></div>
  <div class="app"><svg viewBox="0 0 32 32"><path d="M0 0h32v32H0z" fill="#e6e4e4"/><path d="M0 24h15v8H0z" fill="#d88a84"/><path d="M3 21L11 2l5 8 6-8 6 20-7-5-5-7-5 7z" fill="#cf5424"/><path d="M11 2l5 8-5 7-8 5z" fill="#a63c18"/><text x="24" y="31" class="t-tiny">MUD</text></svg></div>
  <div class="app hot"><svg viewBox="0 0 32 32"><path d="M1 3h14l2 3h13v24H1z" fill="#efc95e"/><path d="M2 8h28v23H1z" fill="#f7e28f"/><path d="M4 3h4v2H4zM14 5h4v2h-4z" fill="#34a030"/><path d="M21 6h5v2h-5z" fill="#2a8ad8"/><path d="M5 30V18h23v13h-4v-8H9v8z" fill="#8cc8ec" stroke="#4a9ac8"/></svg></div>
  <div class="app"><svg viewBox="0 0 32 32"><path d="M0 0h32v32H0z" fill="#e4e6e6"/><path d="M0 24h15v8H0z" fill="#8fcac4"/><path d="M8 3l9-2 8 4v17l-8 3-9-2 4-7-4-5z" fill="#16a39c"/><path d="M17 1l8 4v17l-8 3 4-12z" fill="#0d6d6c"/><text x="24" y="31" class="t-tiny">MAX</text></svg></div>
  <div class="app"><svg viewBox="0 0 32 32"><path d="M27 11Q25 3 16 4 5 6 5 18q2 13 14 11 8-2 10-8" fill="none" stroke="#0f5b83" stroke-width="6" transform="translate(-1.500 -1)"/><path d="M27 10Q25 3 18 3.500 7 5 7 17q1 12 13 10 7-1 9-6" fill="none" stroke="#25abe8" stroke-width="6"/></svg></div>
  <div class="app"><svg viewBox="0 0 32 32"><circle cx="16" cy="16" r="15" fill="#f2f0f4"/><path d="M7 8l5 2.500h8L25 8v12q0 4-4 5H11q-4-1-4-5z" fill="#4b2a77"/></svg></div>
  <div class="app hot"><svg viewBox="0 0 32 32"><circle cx="17" cy="15" r="13" fill="#1f6fb8"/><path d="M16 2q9 0 12 8l-6 4-6-4z" fill="#48b8e0"/><path d="M3 5l4 3q4-3 8 1l3 2-6 4q3 6 9 5 5-2 5-9l2-3-1-4q5 5 4 13-2 13-15 14Q1 30 1 17q0-8 2-12z" fill="#ef6c1a"/><path d="M29 8q4 14-8 21 10-1 10-14z" fill="#fbc12d"/></svg></div>
  <div class="app"><svg viewBox="0 0 32 32"><circle cx="16" cy="16" r="15" fill="url(#gC4d)"/><path d="M5 20Q8 5 23 6q5 3 2 12-6 11-17 9-4-2-3-7z" fill="#131d68"/><path d="M12 19q0-8 9-9 3 2 0 8-6 7-9 1z" fill="#7b90c8"/></svg></div>
  <div class="app"><svg viewBox="0 0 32 32"><path d="M1 16l9-10 16-5 4 15-4 15-16-5z" fill="#202020"/><path d="M9 14.500l7-7 7-2-5 9zM9 17.500l7 7 7 2-5-9zM21 16l4-8 2 8-2 8z" fill="#fff"/></svg></div>
  <div class="app hot"><svg viewBox="0 0 32 32"><use href="#skype"/></svg></div>
  <div class="app current"><svg viewBox="0 0 32 32"><path d="M4 2h24v24H4z" fill="#291a0c" stroke="#f57a1e" stroke-width="3"/><text x="16" y="20" class="t-ai">Ai</text></svg></div>
  <div class="tray">
    <span class="desk">Desktop</span><span class="chev">»</span>
    <svg class="kbd" width="30" height="18"><rect x=".5" y=".5" width="29" height="17" rx="1" fill="#555a4e" stroke="#fff"/><path d="M3 4.500h24M3 8.500h24" stroke="#fff" stroke-width="2.500" stroke-dasharray="2.500 1"/><path d="M3 13h4m1.500 0h13m1.500 0h4" stroke="#fff" stroke-width="2.500"/></svg>
    <svg class="up" width="8" height="5"><path d="M0 5h8L4 0z" fill="#fff"/></svg>
    <svg class="win" width="16" height="15" fill="#fff"><path d="M0 2l7-1v6H0zM8 .800L16 0v7H8zM0 8h7v6l-7-1zM8 8h8v7l-8-.8z"/></svg>
    <svg class="dbx" width="18" height="16"><path d="M5 1l4 2.500L5 6 1 3.500zM12 1l4 2.500L12 6 8.500 3.500zM5 6l4 2.500L5 11 1 8.500zM12 6l4 2.500-4 2.500-3.500-2.500zM4 12l4 3 5-3-4-2.500z" fill="#fff" stroke="#555" stroke-width=".6"/><circle cx="12" cy="11" r="4.500" fill="#2ca532"/><path d="M10 11l2 2 3-4" stroke="#fff" stroke-width="1.500" fill="none"/></svg>
    <svg class="flag" width="17" height="15"><path d="M1.500 0v15" stroke="#fff" stroke-width="1.600"/><path d="M3 1.500h6v2h6l-2 3 1 3H8v-2H3z" fill="#fff" stroke="#555" stroke-width=".5"/></svg>
    <svg class="sig" width="16" height="13" fill="#fff"><path d="M0 10h2v3H0zM3.500 8h2v5h-2zM7 5.500h2V13H7zM10.500 3h2v10h-2zM14 0h2v13h-2z"/></svg>
    <svg class="vol" width="17" height="16"><path d="M0 5h3l5-5v14L3 10H0z" fill="#fff" stroke="#555" stroke-width=".5"/><circle cx="11.500" cy="10.500" r="4.800" fill="#dc2a26"/><path d="M9.500 8.500l4 4m0-4l-4 4" stroke="#fff" stroke-width="1.500"/></svg>
    <div class="clock"><span>21:11</span><span>30/06/2015</span></div>
  </div>
</footer>
</body>
</html>
```

FILE: styles.css
```css
* { box-sizing: border-box; }
html, body { margin: 0; width: 1920px; height: 1080px; overflow: hidden; }
body { display: flex; flex-direction: column; position: relative; background: #484848; color: #dcdcdc; font: 10px/1 "Noto Sans", "Open Sans", sans-serif; }
svg { display: block; flex: none; overflow: visible; }
i, b, u, s, em { font-style: normal; font-weight: normal; text-decoration: none; display: block; flex: none; }
span { white-space: nowrap; }
.defs { position: absolute; }

/* menu bar */
.menubar { height: 30px; flex: none; display: flex; align-items: center; background: #494949; font: 12px/16px "Open Sans", "Noto Sans", sans-serif; }
.brand { width: 20px; margin-left: 8px; margin-top: -3px; color: #bd8660; font: bold 20px/26px "Noto Sans", sans-serif; transform: scaleX(.9); transform-origin: left; }
.menu { display: flex; gap: 17px; margin-left: 19px; width: 393px; letter-spacing: -.22px; }
.vsep { width: 2px; height: 20px; background: #383838; border-right: 1px solid #5a5a5a; }
.menubar > .vsep { margin-left: 13px; }
.bridge { width: 16px; height: 15px; margin-left: 14px; border: 1px solid #6e6e6e; color: #787878; font: 9px/13px "Noto Sans", sans-serif; text-align: center; }
.arrange { margin-left: 23px; }
.menubar-right { margin-left: auto; display: flex; align-items: center; height: 30px; padding-right: 3px; }
.workspace-name { margin-left: 11px; width: 51px; color: #c8c8c8; font-size: 11px; margin-top: -2px; }
.ws-arrow { margin: 1px 14px 0 10px; }
.search { width: 125px; height: 19px; margin-left: 8px; margin-top: -1px; border: 1px solid #222; background: #a0a0a0; padding: 2px; }
.winbtns { display: flex; align-self: flex-start; margin-left: 9px; height: 19px; border: 1px solid #1c1c1c; border-top: 0; border-radius: 0 0 4px 4px; background: linear-gradient(#4c4c4c, #333); }
.wb { display: flex; align-items: center; justify-content: center; border-right: 1px solid #1c1c1c; height: 18px; }
.wb-min { width: 28px; } .wb-max { width: 27px; } .wb-close { width: 46px; border: 0; }

/* control bar */
.control { height: 35px; flex: none; display: flex; align-items: center; border-top: 1px solid #252525; border-bottom: 1px solid #252525; box-shadow: inset 0 1px #5c5c5c; background: #494949; padding-left: 5px; }
.vgrip { width: 3px; height: 20px; background: repeating-linear-gradient(#1c1c1c 0 1px, #555 1px 2px); }
.lbl { letter-spacing: -.32px; margin-top: -3px; line-height: 14px; }
.nosel { margin-left: 7px; width: 73px; }
.tall { height: 25px; }
.field { display: flex; height: 20px; border: 1px solid #282828; color: #111; letter-spacing: -.28px; }
.field u { width: 15px; border-left: 1px solid #2b2b2b; background: linear-gradient(#636363, #525252); display: flex; align-items: center; justify-content: center; }
.field em { flex: 1; background: #a0a0a0; line-height: 17px; padding-left: 3px; }
.field em.light { background: #e2e2e2; display: flex; align-items: center; }
.field s { width: 17px; background: #595959; border-right: 1px solid #2b2b2b; display: flex; justify-content: center; padding-top: 1px; overflow: hidden; }
.chip { flex: 1; border: 1px solid #fff; }
.red { background: #ed1c24; }
.pale { background: #e2e2e2; border: 0; }
.ring { background: #000; display: flex; padding: 3px; }
.ring::after { content: ""; flex: 1; border: 1px solid #fff; background: #484848; box-shadow: inset 0 0 0 1px #000, inset 0 0 0 2px #fff; }
.fill { width: 34px; margin-left: 6px; } .strk { width: 34px; margin-left: 7px; }
.link { color: #ee8e2c; border-bottom: 1px dotted #ee8e2c; margin-top: 0; line-height: 12px; }
.l-stroke { margin-left: 13px; width: 32px; }
.weight { width: 79px; margin-left: 6px; }
.profile { width: 106px; margin-left: 9px; } .profile em svg { margin: 0 4px 0 2px; }
.brush { width: 103px; margin-left: 8px; } .brush em svg { margin: 0 9px 0 2px; }
.l-opacity { margin-left: 7px; width: 37px; }
.opac { width: 68px; margin-left: 6px; }
.l-style { margin-left: 6px; width: 32px; }
.sty { width: 34px; } .sty + .vsep { margin-left: 6px; }
.btn { height: 20px; border: 1px solid #252525; background: linear-gradient(#636363, #505050); line-height: 17px; text-align: center; letter-spacing: -.27px; color: #e4e4e4; }
.b-doc { width: 112px; margin-left: 6px; } .b-pref { width: 85px; margin-left: 7px; }
.isolate { margin-left: 11px; margin-top: -2px; }
.flyout { margin-left: auto; margin-right: 16px; }

/* workspace */
.work { height: 975px; flex: none; display: flex; background: #222; }
.collapse { height: 12px; background: #303030; border-bottom: 1px solid #222; display: flex; justify-content: flex-end; padding: 3px 4px 0 0; width: 100%; }
.collapse.left { justify-content: flex-start; padding: 3px 0 0 4px; }
.grip { width: 19px; height: 4px; margin: 4px auto 5px; background: repeating-linear-gradient(90deg, #161616 0 1px, #505050 1px 2px); }
.tools { width: 39px; flex: none; background: #484848; margin-right: 3px; border-left: 1px solid #303030; }
.tools > .grip { margin-bottom: 0; margin-top: 3px; }
.tgroup { border-top: 2px solid #3a3a3a; margin: 0 4px; display: flex; flex-direction: column; align-items: center; }
.tgroup.first { border: 0; margin-top: 9px; }
.tool { width: 28px; height: 24px; display: flex; align-items: center; justify-content: center; position: relative; }
.tool svg { width: 20px; height: 20px; }
.tool.active { background: #333; border: 1px solid #252525; border-radius: 2px; height: 22px; margin: 1px 0; }
.tool.more::after { content: ""; position: absolute; right: 1px; bottom: 2px; width: 4px; height: 4px; background: #ddd; clip-path: polygon(100% 0, 100% 100%, 0 100%); }
.mini { display: flex; gap: 9px; margin-top: 2px; height: 20px; padding-top: 1px; }
.fillstroke { height: 33px; width: 30px; margin-top: -2px; }
.modes { display: flex; border: 1px solid #222; gap: 1px; background: #222; margin-top: 3px; }
.modes b { width: 8px; height: 8px; }
.grad { background: linear-gradient(90deg, #eee, #333); }
.none { background: linear-gradient(to bottom right, #fff 42%, #ed1c24 43% 57%, #fff 58%); }
.drawmode { margin-top: 8px; } .screenmode { margin-top: 10px; }

.doc { width: 1838px; flex: none; display: flex; flex-direction: column; }
.tabs { height: 20px; background: linear-gradient(#343434, #2b2b2b); border-bottom: 1px solid #222; display: flex; }
.tab { width: 282px; height: 20px; background: #484848; border-right: 1px solid #222; display: flex; align-items: center; padding-left: 9px; box-shadow: inset 0 1px #5a5a5a; }
.tabname { width: 259px; font-size: 11px; font-weight: 600; letter-spacing: -.06px; }
.view { height: 938px; display: flex; }
.artboard { width: 1708px; background: #fff; border-right: 1px solid #000; }
.edges path { fill: none; stroke: #000; stroke-width: 2.900; }
.nodes > * { fill: #fff; stroke: #000; stroke-width: 2.900; }
.nodes .n-yellow { fill: #fff200; } .nodes .n-red { fill: #ed1c24; } .nodes .n-green { fill: #8dc63f; }
.paste { width: 113px; background: #5d5d5d; }
.vscroll { width: 16px; background: #343434; border-left: 1px solid #262626; display: flex; flex-direction: column; justify-content: space-between; align-items: center; padding: 6px 0 5px; }
.status { height: 17px; border-top: 1px solid #242424; background: #484848; border-bottom: 1px solid #222; display: flex; align-items: center; width: 1837px; }
.gpu { margin-left: 7px; } .share { margin-left: 10px; }
.sfield { display: flex; height: 15px; width: 57px; color: #111; }
.sfield em { flex: 1; background: #a0a0a0; line-height: 17px; padding-left: 2px; letter-spacing: -.3px; }
.sfield u { width: 15px; background: #5e5e5e; border-left: 1px solid #2b2b2b; display: flex; align-items: center; justify-content: center; }
.s-zoom { margin-left: 10px; } .nav-prev { margin-left: 10px; } .s-page { margin-left: 9px; } .nav-next { margin-left: 10px; width: 24px; }
.mode { margin-left: 8px; border-left: 1px solid #303030; width: 208px; line-height: 17px; padding-left: 79px; letter-spacing: -.2px; }
.hscroll { margin-left: 7px; width: 1342px; height: 15px; background: #343434; border-left: 1px solid #222; display: flex; align-items: center; padding-left: 4px; }
.thumb { width: 16px; height: 15px; background: #949494; margin-left: 653px; border-right: 1px solid #222; }
.hscroll svg:last-child { margin-left: 649px; }
.corner { width: 15px; height: 15px; border-left: 1px solid #222; background: #484848; }

/* dock */
.dock { width: 38px; flex: none; margin-left: 1px; background: #484848; border-right: 1px solid #2a2a2a; }
.dgroup { padding: 0 0 2px 1px; border-bottom: 1px solid #222; box-shadow: inset 0 1px #5a5a5a; display: flow-root; }
.dgroup .grip { margin: 3px auto 3px; }
.dicon { height: 28px; width: 29px; margin: 0 auto; display: flex; align-items: center; justify-content: center; }
.dicon svg { width: 20px; height: 20px; }
.dicon.on { background: #303030; border-radius: 2px; height: 25px; margin: 1px auto 2px; border: 1px solid #252525; }

/* swatches panel */
.panel { position: absolute; left: 1639px; top: 503px; width: 242px; height: 142px; background: #484848; border: 1px solid #202020; border-top: 4px solid #1c1c1c; display: flex; flex-direction: column; box-shadow: -2px 1px 3px rgba(0, 0, 0, .25); }
.ptabs { height: 17px; display: flex; background: #343434; font-weight: 600; align-items: stretch; color: #8c8c8c; line-height: 18px; }
.ptab { border-right: 1px solid #222; padding-left: 6px; border-bottom: 1px solid #222; }
.ptab.on { width: 58px; background: #484848; color: #dcdcdc; border-bottom: 0; }
.p2 { width: 51px; } .p3 { width: 55px; }
.pctl { margin: 3px 0 0 36px; }
.plist { margin: 6px 5px 0 5px; height: 87px; border: 1px solid #2a2a2a; display: flex; justify-content: space-between; overflow: hidden; background: #484848; }
.srow { display: flex; gap: 1px; margin-bottom: 1px; background: #5e5e5e; width: max-content; box-shadow: 0 0 0 1px #5e5e5e; }
.srow.gap { margin-top: 3px; } .srow.gap2 { margin-top: 3px; }
.srow b { width: 13px; height: 13px; }
.fold { background: #555; } .w { background: #fff; } .c000 { background: #000; }
.sel { background: #ed1c24; border: 1px solid #fff; box-shadow: inset 0 0 0 1px #000; }
.r1f { background: #fff200; } .r1g { background: #00a651; } .r1h { background: #00aeef; } .r1i { background: #2e3192; } .r1j { background: #ec008c; } .r1k { background: #be1e2d; } .r1l { background: #ef4136; } .r1m { background: #f15a29; } .r1n { background: #f7941d; } .r1o { background: #fbb040; }
.r2a { background: #f9ed32; } .r2b { background: #d7df23; } .r2c { background: #8dc63f; } .r2d { background: #39b54a; } .r2e { background: #009444; } .r2f { background: #006838; } .r2g { background: #2bb673; } .r2h { background: #13a89e; } .r2i { background: #27aae1; } .r2j { background: #0f75bc; } .r2k { background: #2b3990; } .r2l { background: #262262; } .r2m { background: #662d91; } .r2n { background: #92278f; } .r2o { background: #9e1f63; }
.r3a { background: #da1c5c; } .r3b { background: #ee2a7b; } .r3c { background: #c2b59b; } .r3d { background: #9b8579; } .r3e { background: #726658; } .r3f { background: #594a42; } .r3g { background: #c49a6c; } .r3h { background: #a97c50; } .r3i { background: #8b5e3c; } .r3j { background: #754c29; } .r3k { background: #603913; } .r3l { background: #3c2415; } .r3m { background: linear-gradient(90deg, #fff, #222); } .r3n { background: linear-gradient(90deg, #fde61a, #f05a28); } .r3o { background: linear-gradient(90deg, #1c75bc, #9ec8ee); }
.leafy { background: #edf3c8; } .r4c { background: #9a6e48; }
.k1 { background: #3a3a3c; } .k2 { background: #58595b; } .k3 { background: #6d6e71; } .k4 { background: #808285; } .k5 { background: #939598; } .k6 { background: #a7a9ac; } .k7 { background: #bcbec0; } .k8 { background: #d1d3d4; } .k9 { background: #e6e7e8; } .k10 { background: #f1f2f2; }
.q1 { background: #f26522; } .q2 { background: #ffde17; } .q3 { background: #0ba14a; } .q4 { background: #21409a; } .q5 { background: #7f3f98; }
.pscroll { width: 13px; border-left: 1px solid #222; background: #333; }
.pscroll i { height: 15px; display: flex; align-items: center; justify-content: center; }
.pscroll .pthumb { height: 50px; background: #909090; margin: 0 1px 5px 0; }
.pfoot { height: 20px; padding: 1px 0 0 7px; }
.pbottom { border-top: 1px solid #2a2a2a; height: 7px; }
.pbottom .grip { margin: 1px auto 0; }

/* taskbar */
.taskbar { height: 40px; flex: none; display: flex; background: linear-gradient(#8f997f, #879076); font: 12px/17px "Open Sans", "Noto Sans", sans-serif; color: #fff; }
.start { width: 50px; padding: 6px 0 0 11px; }
.app { width: 60px; height: 39px; margin: 0 1px; display: flex; justify-content: center; padding-top: 4px; flex: none; }
.app svg { width: 32px; height: 32px; }
.app.hot, .app.current { margin-top: 1px; padding-top: 3px; border: 1px solid #b9c1ab; background: rgba(255, 255, 255, .18); }
.app.hot svg, .app.current svg { margin-top: -1px; }
.app.current { border-color: #fff; background: rgba(255, 255, 255, .42); }
.t-dev { font: bold 11px "Liberation Sans", sans-serif; fill: #fff; text-anchor: middle; }
.t-cpp { font: bold 11px "Liberation Sans", sans-serif; fill: #0a1c66; text-anchor: middle; }
.t-ps { font: bold 15px "Noto Sans", sans-serif; fill: #86c2ff; text-anchor: middle; }
.t-ai { font: bold 15px "Noto Sans", sans-serif; fill: #f57a1e; text-anchor: middle; }
.t-tiny { font: bold 6px "Liberation Sans", sans-serif; fill: #333; text-anchor: middle; }
.tray { margin-left: auto; display: flex; align-items: center; height: 40px; padding-right: 15px; }
.desk { width: 54px; letter-spacing: -.45px; margin-top: -1px; }
.chev { width: 20px; align-self: flex-start; font-size: 14px; }
.up { margin-left: 13px; } .win { margin-left: 13px; } .dbx { margin-left: 7px; } .flag { margin-left: 7px; } .sig { margin-left: 7px; } .vol { margin-left: 8px; }
.clock { width: 66px; margin-left: 12px; display: flex; flex-direction: column; align-items: center; letter-spacing: -.5px; }
```
